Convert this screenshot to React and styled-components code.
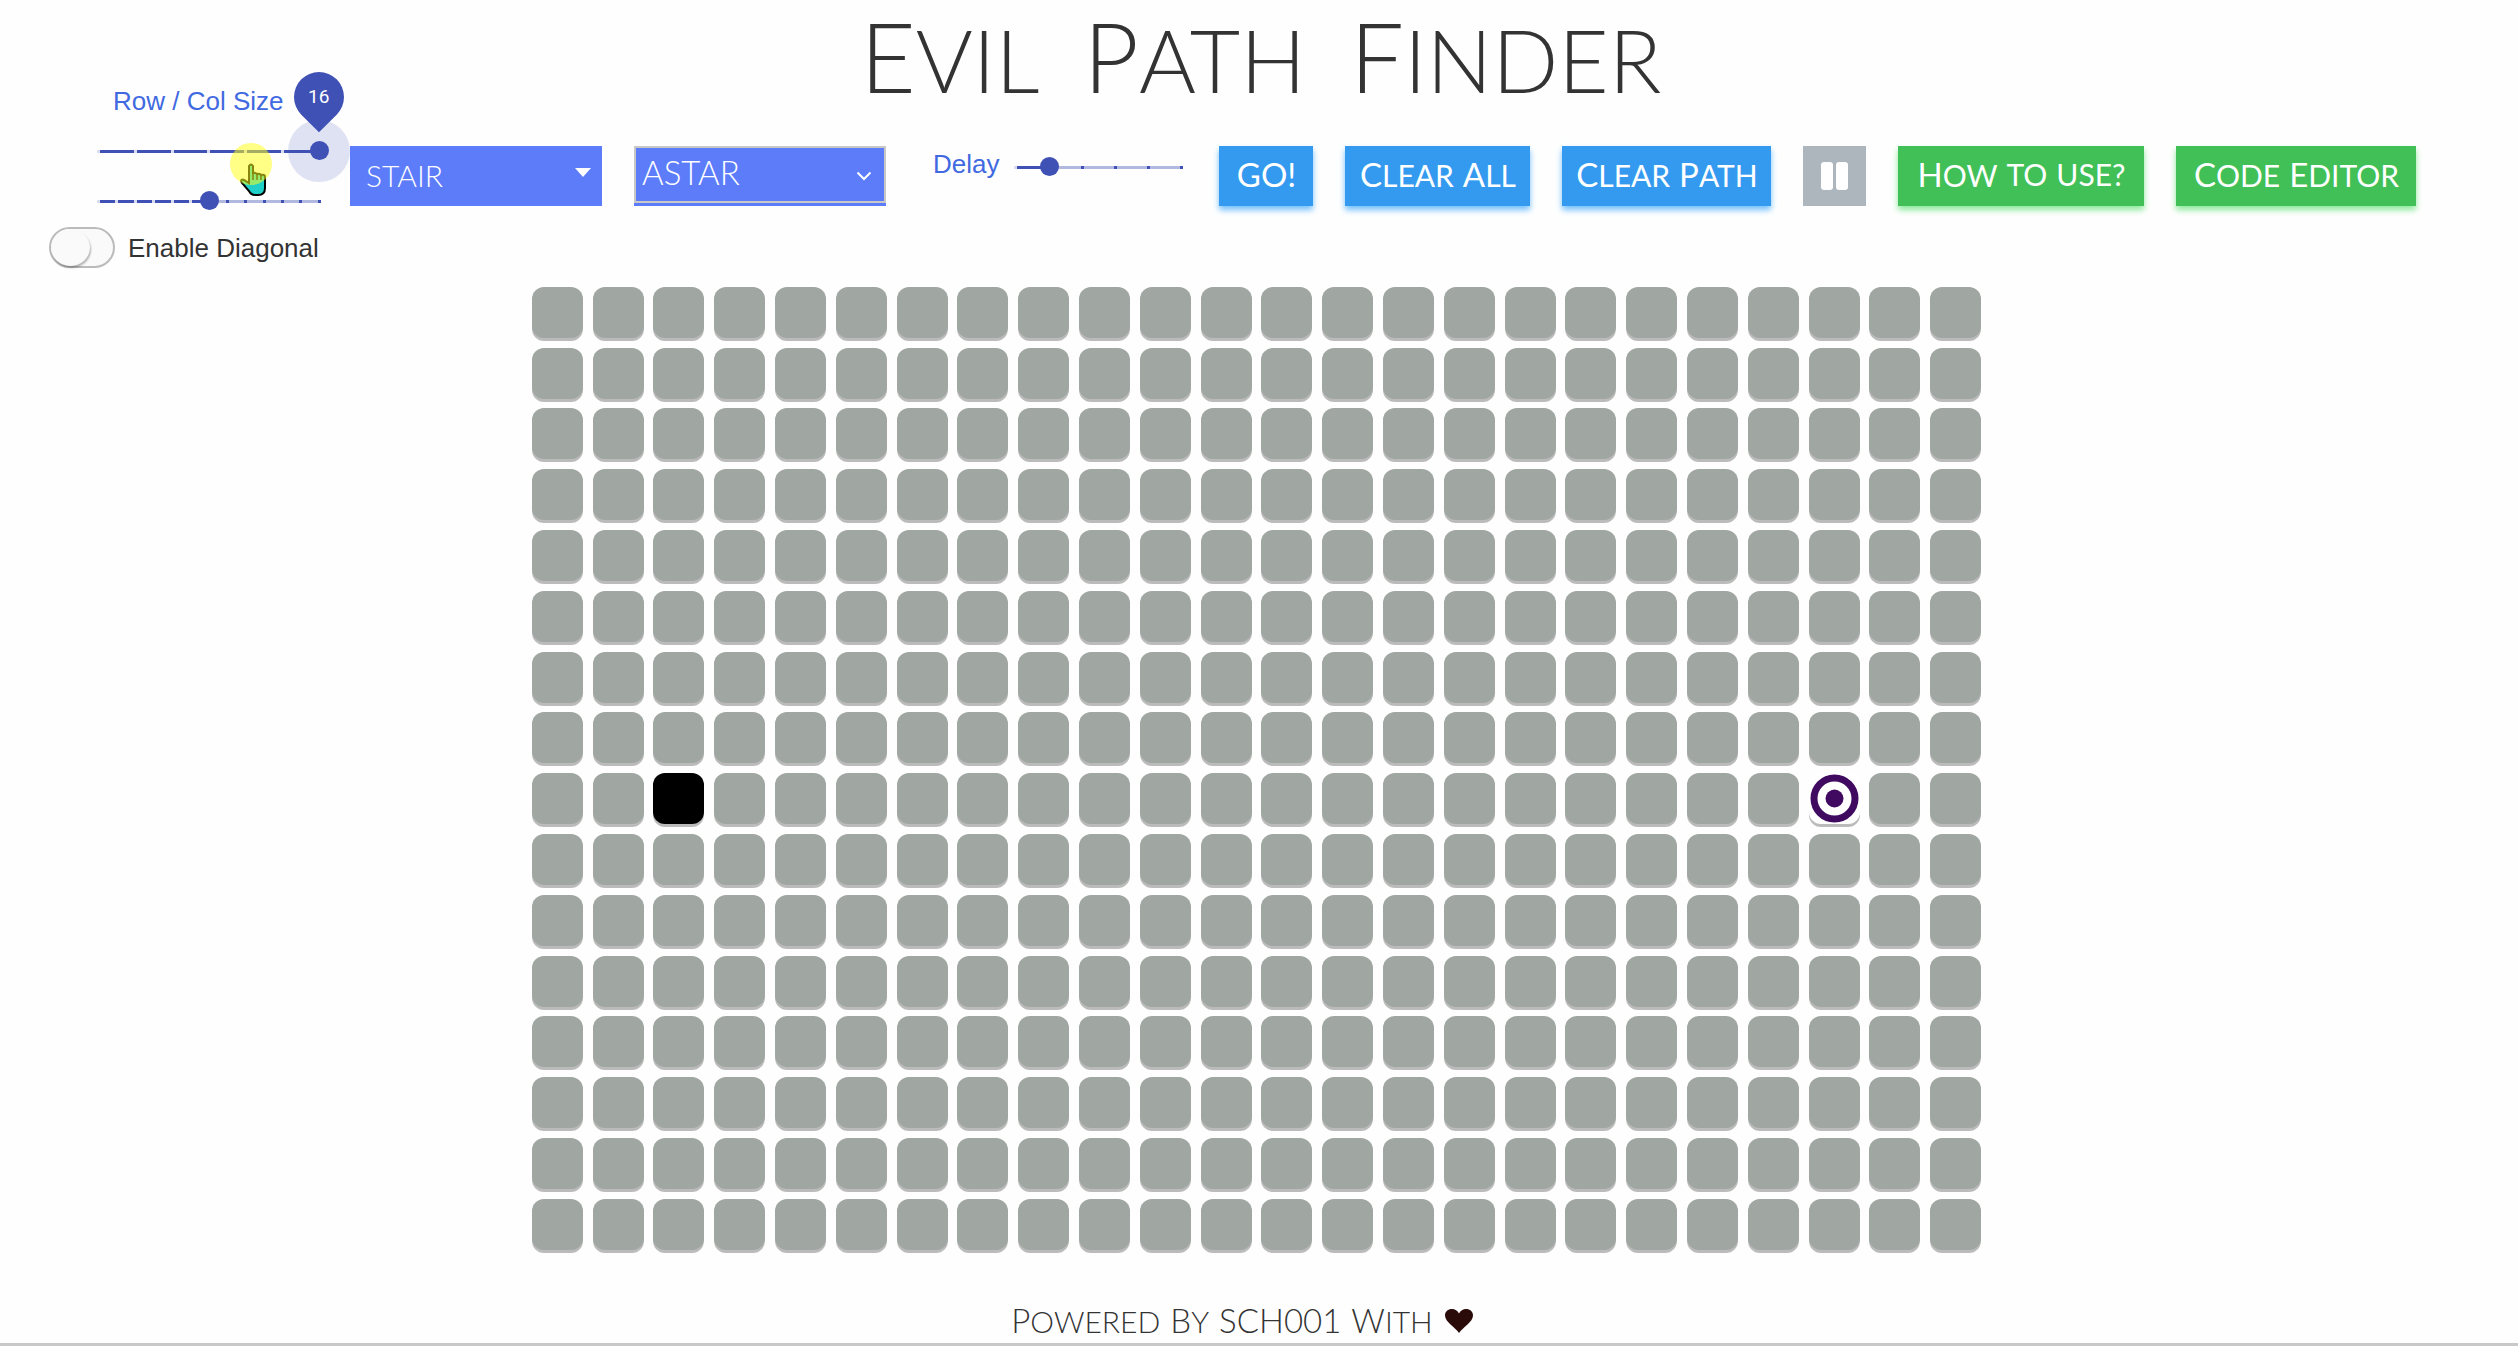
import React, { Fragment, useState } from "react";
import styled, { createGlobalStyle } from "styled-components";

const ROWS = 16;
const COLS = 24;
const START = { row: 8, col: 2 };
const TARGET = { row: 8, col: 21 };

const thin = '"Lato", "Open Sans", sans-serif';
const plain = '"Liberation Sans", Arial, sans-serif';

const GlobalStyle = createGlobalStyle`
  *, *::before, *::after { box-sizing: border-box; }
  html { height: 100%; }
  body {
    margin: 0;
    min-height: 100%;
    background: #fefefe;
    color: #333;
    font-family: ${thin};
  }
  #root { display: grid; min-height: 100vh; }
`;

const Page = styled.div`
  display: flex;
  flex-direction: column;
  border-bottom: 3px solid #c8c8c8;
`;

const Title = styled.h1`
  display: flex;
  justify-content: center;
  gap: 44px;
  margin: 0;
  padding: 32px 0 2px 4px;
  font-size: 87px;
  line-height: 48px;
  font-weight: 300;
`;

const Word = styled.span`
  display: inline-block;
  text-transform: uppercase;
  &::first-letter { font-size: 110%; }
`;

const SmallWord = styled.span`
  text-transform: uppercase;
`;

const TallWord = styled.span`
  font-size: 110%;
  text-transform: uppercase;
`;

const Toolbar = styled.div`
  display: flex;
  align-items: flex-start;
  padding: 0 49px;
`;

const SizePanel = styled.div`
  display: flex;
  flex-direction: column;
  width: 301px;
`;

const SliderStack = styled.div`
  display: flex;
  flex-direction: column;
  padding-left: 40px;
`;

const Label = styled.label`
  font: 26px/30px ${plain};
  color: #4169e1;
`;

const SizeLabel = styled(Label)`
  padding: 0 0 0 24px;
  height: 40px;
`;

const SliderBox = styled.div`
  position: relative;
  display: grid;
  align-items: center;
  width: ${(p) => p.$width}px;
  height: ${(p) => p.$height}px;
  & > * { grid-area: 1 / 1; }
`;

const Rail = styled.div`
  display: flex;
  justify-content: space-between;
  height: 3px;
  margin: 0 8px;
  background: linear-gradient(#3f51b5, #3f51b5) no-repeat #b2b9e1;
`;

const Tick = styled.span`
  width: 3px;
  height: 3px;
  background: ${(p) => (p.$passed ? "#d9dcf0" : "#3f51b5")};
`;

const Range = styled.input`
  appearance: none;
  position: relative;
  width: 100%;
  height: 20px;
  margin: 0;
  background: transparent;
  &::-webkit-slider-runnable-track { height: 20px; background: transparent; }
  &::-webkit-slider-thumb {
    appearance: none;
    width: 19px;
    height: 19px;
    border: 0;
    border-radius: 50%;
    background: #3f51b5;
  }
`;

const Halo = styled.span`
  position: absolute;
  right: -21px;
  width: 62px;
  height: 62px;
  border-radius: 50%;
  background: rgba(63, 81, 181, 0.16);
`;

const Balloon = styled.output`
  position: absolute;
  right: -15px;
  bottom: 54px;
  display: grid;
  place-items: center;
  width: 50px;
  height: 50px;
  border-radius: 50% 50% 50% 0;
  background: #3f51b5;
  color: #fff;
  font: 19px/24px "Roboto", sans-serif;
  transform: rotate(-45deg);
  & > span { transform: rotate(45deg); }
`;

const SwitchLabel = styled.label`
  display: flex;
  align-items: center;
  gap: 13px;
  margin-top: 1px;
  font: 26px/30px ${plain};
  color: #333;
`;

const Switch = styled.input`
  appearance: none;
  display: flex;
  width: 66px;
  height: 41px;
  margin: 0;
  border: 2px solid #bbb;
  border-radius: 21px;
  background: #fafafa;
  &::before {
    content: "";
    width: 39px;
    height: 37px;
    border-radius: 50%;
    background: #fafafa;
    box-shadow: 1px 2px 2px rgba(0, 0, 0, 0.28);
  }
  &:checked { justify-content: flex-end; background: #5c7cfa; }
`;

const Controls = styled.div`
  display: flex;
  padding-top: 60px;
`;

const Group = styled.div`
  display: flex;
  gap: 32px;
`;

const SelectBox = styled.div`
  display: grid;
  align-items: center;
  justify-items: end;
  width: 252px;
  height: 60px;
  background: #5c7cfa;
  color: #fff;
  & > * { grid-area: 1 / 1; }
  & > svg { position: relative; pointer-events: none; }
`;

const Select = styled.select`
  appearance: none;
  width: 100%;
  height: 60px;
  margin: 0;
  padding: 0 16px 2px;
  border: 0;
  border-radius: 0;
  background: transparent;
  color: inherit;
  font: 300 30px/40px ${thin};
`;

const OutlinedSelect = styled(Select)`
  align-self: start;
  height: 57px;
  padding: 0 6px 6px;
  border: 2px solid #c8c8c8;
  font-size: 33px;
`;

const DelayField = styled.div`
  display: flex;
  gap: 7px;
  margin: 3px 28px 0 47px;
`;

const Button = styled.button`
  display: flex;
  align-items: center;
  justify-content: center;
  gap: 9px;
  width: ${(p) => p.$width}px;
  height: 60px;
  padding: 0 0 4px;
  border: 0;
  background: ${(p) => p.$color};
  box-shadow: ${(p) => (p.$glow ? `0 4px 6px ${p.$glow}` : "none")};
  color: #fff;
  font: 400 30px/40px ${thin};
  white-space: nowrap;
  & > svg { margin-top: 4px; }
`;

const Board = styled.main`
  display: grid;
  grid-template-columns: repeat(${COLS}, 1fr);
  width: 1464px;
  max-width: 100%;
  margin: 14px auto 0;
  padding-right: 5px;
`;

const Slot = styled.div`
  display: grid;
  place-items: center;
  aspect-ratio: 1;
`;

const cellColors = { empty: "#a0a6a1", start: "#000", target: "#fff" };

const Cell = styled.button`
  display: grid;
  place-items: center;
  width: 51px;
  height: 51px;
  padding: 0;
  border: 0;
  border-radius: 12px;
  background: ${(p) => cellColors[p.$kind]};
  box-shadow: 0 3px 0 #bbb;
`;

const Footer = styled.footer`
  display: flex;
  justify-content: center;
  align-items: center;
  gap: 12px;
  margin-top: auto;
  padding: 0 34px 2px 0;
  font-size: 30px;
  line-height: 40px;
  font-weight: 300;
`;

const Credits = styled.span`
  display: flex;
  align-items: baseline;
  gap: 10px;
`;

const Pointer = styled.svg`
  position: absolute;
  left: 230px;
  top: 142px;
  pointer-events: none;
`;

function Slider({ id, label, value, min, max, onChange, width, height, active }) {
  const steps = max - min;
  const done = value - min;
  return (
    <SliderBox $width={width} $height={height}>
      {active && <Halo />}
      <Rail style={{ backgroundSize: `${(done / steps) * 100}% 100%` }}>
        {Array.from({ length: steps + 1 }, (_, i) => (
          <Tick key={i} $passed={i < done} />
        ))}
      </Rail>
      <Range
        id={id}
        type="range"
        aria-label={label}
        min={min}
        max={max}
        value={value}
        onChange={(e) => onChange(Number(e.target.value))}
      />
      {active && (
        <Balloon htmlFor={id}>
          <span>{value + 10}</span>
        </Balloon>
      )}
    </SliderBox>
  );
}

/* Capitalised words get a taller initial, lower-case ones stay small,
   and fully upper-case ones are tall throughout. */
const Words = ({ children }) =>
  children.split(" ").map((word, i) => {
    const Part =
      word === word.toLowerCase() ? SmallWord : word === word.toUpperCase() ? TallWord : Word;
    return (
      <Fragment key={i}>
        {i > 0 && " "}
        <Part>{word}</Part>
      </Fragment>
    );
  });

export default function App() {
  const [rows, setRows] = useState(6);
  const [cols, setCols] = useState(6);
  const [delay, setDelay] = useState(1);
  const blue = { $color: "#339af0", $glow: "#74c0fc" };
  const green = { $color: "#40c057", $glow: "#8ce99a" };

  return (
    <Page>
      <GlobalStyle />
      <Title>
        <Words>Evil Path Finder</Words>
      </Title>
      <Toolbar>
        <SizePanel>
          <SliderStack>
            <SizeLabel htmlFor="rows">Row / Col Size</SizeLabel>
            <Slider id="rows" value={rows} min={0} max={6} onChange={setRows} width={240} height={50} active />
            <Slider id="cols" label="Column size" value={cols} min={0} max={12} onChange={setCols} width={240} height={50} />
          </SliderStack>
          <SwitchLabel>
            <Switch type="checkbox" />
            Enable Diagonal
          </SwitchLabel>
        </SizePanel>
        <Controls>
          <Group>
            <SelectBox>
              <Select aria-label="Maze pattern" defaultValue="STAIR">
                <option>STAIR</option>
              </Select>
              <svg width="27" height="16" viewBox="0 0 27 16">
                <path d="M0 0h16l-8 9z" fill="#fff" />
              </svg>
            </SelectBox>
            <SelectBox>
              <OutlinedSelect aria-label="Algorithm" defaultValue="ASTAR">
                <option>ASTAR</option>
              </OutlinedSelect>
              <svg width="30" height="10" viewBox="0 0 30 10">
                <path d="M1.500 1.500l6.500 6.500 6.500-6.500" fill="none" stroke="#fff" strokeWidth="2" />
              </svg>
            </SelectBox>
          </Group>
          <DelayField>
            <Label htmlFor="delay">Delay</Label>
            <Slider id="delay" value={delay} min={0} max={5} onChange={setDelay} width={185} height={36} />
          </DelayField>
          <Group>
            <Button {...blue} $width={94}><Words>GO!</Words></Button>
            <Button {...blue} $width={185}><Words>Clear All</Words></Button>
            <Button {...blue} $width={209}><Words>Clear Path</Words></Button>
            <Button $color="#adb5bd" $width={63} aria-label="Pause">
              <svg width="27" height="28" viewBox="0 0 27 28" fill="#fff">
                <rect x="0" y="0" width="12" height="28" rx="3" />
                <rect x="15" y="0" width="12" height="28" rx="3" />
              </svg>
            </Button>
            <Button {...green} $width={246}><Words>How to use?</Words></Button>
            <Button {...green} $width={240}><Words>Code Editor</Words></Button>
          </Group>
        </Controls>
      </Toolbar>
      <Board>
        {Array.from({ length: ROWS * COLS }, (_, i) => {
          const row = Math.floor(i / COLS);
          const col = i % COLS;
          const is = (p) => p.row === row && p.col === col;
          const kind = is(START) ? "start" : is(TARGET) ? "target" : "empty";
          return (
            <Slot key={i}>
              <Cell $kind={kind} aria-label={`Cell ${row + 1}, ${col + 1}`}>
                {kind === "target" && (
                  <svg width="51" height="51" viewBox="0 0 51 51">
                    <circle cx="25.500" cy="25.500" r="20.500" fill="none" stroke="#400a60" strokeWidth="7" />
                    <circle cx="25.500" cy="25.500" r="9" fill="#400a60" />
                  </svg>
                )}
              </Cell>
            </Slot>
          );
        })}
      </Board>
      <Footer>
        <Credits>
          <Words>Powered By SCH001 With</Words>
        </Credits>
        <svg width="28" height="24" viewBox="0 0 28 24">
          <path d="M14 24C10 18 0 13 0 6.500C0 2.500 3 0 7 0c3 0 5.500 1.500 7 4.500C15.500 1.500 18 0 21 0c4 0 7 2.500 7 6.500C28 13 18 18 14 24z" fill="#2b0a0a" />
        </svg>
      </Footer>
      <Pointer width="44" height="56" viewBox="0 0 44 56">
        <path
          d="M19 24q2-3 4 0v7q2-1 4 1q3-1 4 1q4-1 4 2v11c0 5-3 7-7 7h-3c-3 0-5-2-6-4l-7-8c-2-3 0-4 2-3l5 3z"
          fill="#20d0c8"
          stroke="#000"
          strokeWidth="2"
        />
        <path d="M23 31v7M27 32v6M31 33v5" stroke="#000" strokeWidth="1.500" />
        <circle cx="21" cy="22" r="21" fill="#ffff18" fillOpacity="0.53" />
      </Pointer>
    </Page>
  );
}
